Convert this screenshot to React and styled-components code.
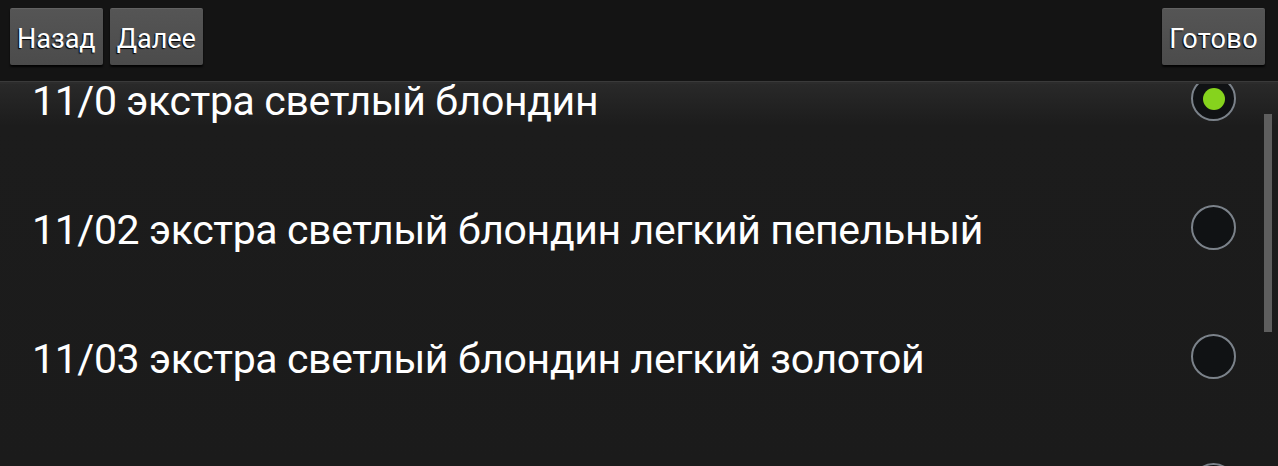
import { useLayoutEffect, useRef, useState } from 'react';
import styled, { createGlobalStyle } from 'styled-components';

const GlobalStyle = createGlobalStyle`
    html, body {
        margin: 0;
        padding: 0;
        background: #1b1b1b;
    }

    body {
        font-family: Roboto, 'Noto Sans', sans-serif;
        -webkit-font-smoothing: antialiased;
    }
`;

const Screen = styled.div`
    width: 1278px;
    height: 466px;
    display: flex;
    flex-direction: column;
    overflow: hidden;
    background: #1b1b1b;
`;

const Toolbar = styled.div`
    height: 82px;
    flex-shrink: 0;
    display: flex;
    align-items: flex-start;
    gap: 7px;
    padding: 8px 13px 0 10px;
    box-sizing: border-box;
    background: #141414;
    border-bottom: 1px solid #3a3a3a;
    position: relative;
    z-index: 1;
`;

const Spacer = styled.div`
    flex: 1;
`;

const Button = styled.button`
    height: 57px;
    padding: 3px 7px 0;
    display: flex;
    align-items: center;
    justify-content: center;
    border: none;
    border-top: 1px solid #626262;
    border-radius: 2px;
    background: linear-gradient(#555555, #4b4b4b);
    box-shadow: 0 2px 2px rgba(0, 0, 0, 0.85);
    color: #ffffff;
    font-family: Roboto, sans-serif;
    font-size: 27px;
    letter-spacing: ${({ $wide }) => ($wide ? 0.4 : 0)}px;
    text-shadow: -1px 1px 1px #000;
    cursor: pointer;
`;

const ListArea = styled.div`
    flex: 1;
    position: relative;
    border-top: 2px solid #2c2c2c;
    background: linear-gradient(#292929, #1c1c1c 42px, #1b1b1b);
    overflow: hidden;
`;

const Scroller = styled.div`
    height: 100%;
    overflow: hidden;
`;

const Row = styled.label`
    height: 129px;
    display: flex;
    align-items: center;
    justify-content: space-between;
    padding: 0 42px 0 32px;
    color: #ffffff;
    cursor: pointer;
`;

const Name = styled.span`
    padding-top: 5px;
    font-size: 41px;
    letter-spacing: -0.37px;
`;

const Radio = styled.span`
    width: 45px;
    height: 45px;
    flex-shrink: 0;
    box-sizing: border-box;
    border-radius: 50%;
    border: 2px solid #7b828a;
    background: #101214;
    display: flex;
    align-items: center;
    justify-content: center;

    &::after {
        content: '';
        width: 22px;
        height: 22px;
        border-radius: 50%;
        background: #86d31d;
        display: ${({ $checked }) => ($checked ? 'block' : 'none')};
    }
`;

const ScrollThumb = styled.div`
    position: absolute;
    right: 6px;
    top: 30px;
    width: 8px;
    height: 218px;
    background: #5e5e5e;
`;

const shades = [
    '11/0 экстра светлый блондин',
    '11/02 экстра светлый блондин легкий пепельный',
    '11/03 экстра светлый блондин легкий золотой',
    '11/1 экстра светлый блондин пепельный',
];

const App = () => {
    const [selected, setSelected] = useState(0);
    const scrollRef = useRef(null);

    useLayoutEffect(() => {
        if (scrollRef.current) scrollRef.current.scrollTop = 50;
    }, []);

    return (
        <>
            <GlobalStyle />
            <Screen>
                <Toolbar>
                    <Button>Назад</Button>
                    <Button>Далее</Button>
                    <Spacer />
                    <Button $wide>Готово</Button>
                </Toolbar>
                <ListArea>
                    <Scroller ref={scrollRef}>
                        {shades.map((name, index) => (
                            <Row key={name} onClick={() => setSelected(index)}>
                                <Name>{name}</Name>
                                <Radio $checked={selected === index} />
                            </Row>
                        ))}
                    </Scroller>
                    <ScrollThumb />
                </ListArea>
            </Screen>
        </>
    );
};

export default App;
